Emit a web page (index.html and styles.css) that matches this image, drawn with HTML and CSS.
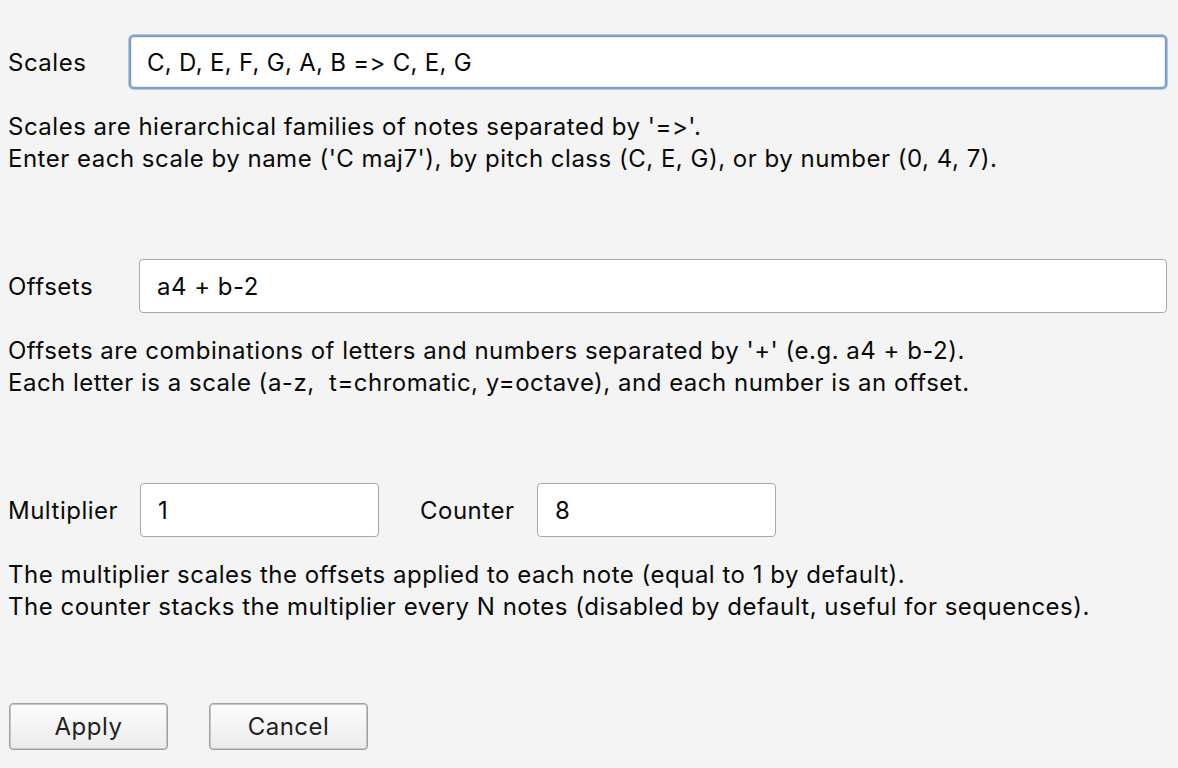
FILE: index.html
```html
<!DOCTYPE html>
<html>
<head>
<meta charset="utf-8">
<link rel="stylesheet" href="styles.css">
</head>
<body>
<div class="dialog">
  <section class="group">
    <div class="row">
      <label class="label label-scales">Scales</label>
      <div class="field field-wide field-focus">C, D, E, F, G, A, B =&gt; C, E, G</div>
    </div>
    <p class="desc">Scales are hierarchical families of notes separated by '=&gt;'.<br>Enter each scale by name ('C maj7'), by pitch class (C, E, G), or by number (0, 4, 7).</p>
  </section>
  <section class="group">
    <div class="row">
      <label class="label label-offsets">Offsets</label>
      <div class="field field-wide">a4 + b-2</div>
    </div>
    <p class="desc">Offsets are combinations of letters and numbers separated by '+' (e.g. a4 + b-2).<br>Each letter is a scale (a-z,&nbsp; t=chromatic, y=octave), and each number is an offset.</p>
  </section>
  <section class="group">
    <div class="row">
      <label class="label label-mult">Multiplier</label>
      <div class="field field-small">1</div>
      <label class="label label-counter">Counter</label>
      <div class="field field-small">8</div>
    </div>
    <p class="desc">The multiplier scales the offsets applied to each note (equal to 1 by default).<br>The counter stacks the multiplier every N notes (disabled by default, useful for sequences).</p>
  </section>
  <div class="buttons">
    <button class="btn">Apply</button>
    <button class="btn">Cancel</button>
  </div>
</div>
</body>
</html>
```
FILE: styles.css
```css
html, body {
  margin: 0;
  padding: 0;
  background: #f4f4f4;
}
body {
  font-family: Inter, "Noto Sans", sans-serif;
  font-size: 24px;
  letter-spacing: 0.5px;
  font-variant-ligatures: none;
  font-feature-settings: "calt" 0, "liga" 0;
  color: #0a0a0a;
  width: 1178px;
  height: 768px;
  overflow: hidden;
}
.dialog {
  padding: 35px 11px 0 8px;
  display: flex;
  flex-direction: column;
}
.group {
  display: flex;
  flex-direction: column;
  margin-bottom: 84px;
}
.group:nth-of-type(3) {
  margin-bottom: 80px;
}
.row {
  display: flex;
  align-items: center;
  height: 54px;
}
.label {
  flex: none;
}
.label-scales { width: 121px; }
.label-offsets { width: 131px; }
.label-mult { width: 132px; }
.label-counter { width: 117px; margin-left: 41px; }
.field {
  box-sizing: border-box;
  height: 54px;
  background: #fff;
  border: 1px solid #a9a9a9;
  border-radius: 4px;
  padding-left: 17px;
  display: flex;
  align-items: center;
}
.field-wide { flex: 1; }
.field-small { width: 239px; padding-left: 17px; }
.field-focus {
  border: 2px solid #7d9fc8;
  padding-left: 16px;
  border-radius: 5px;
  letter-spacing: 0.3px;
  box-shadow: 0 0 0 1px #b3c7df, inset 0 0 0 1px #e2eaf4;
}
.desc {
  margin: 22px 0 0 0;
  line-height: 32px;
}
.buttons {
  display: flex;
  gap: 41px;
  padding-left: 1px;
}
.btn {
  box-sizing: border-box;
  width: 159px;
  height: 47px;
  font-family: inherit;
  font-size: 24px;
  letter-spacing: 0.5px;
  font-variant-ligatures: none;
  font-feature-settings: "calt" 0, "liga" 0;
  color: #222;
  background: linear-gradient(#fdfdfd, #ebebeb);
  border: 1px solid #a0a0a0;
  box-shadow: inset 0 0 0 1px #c4c4c4;
  border-radius: 4px;
  padding: 0;
}
```
